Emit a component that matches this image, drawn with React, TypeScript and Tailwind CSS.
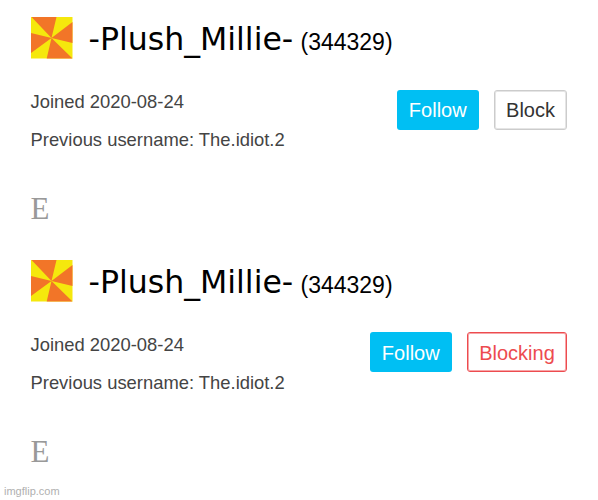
function Avatar() {
  return (
    <svg className="block h-[42px] w-[42px]" viewBox="0 0 42 42">
      <path fill="#f5e80d" d="M0 0H41.5V41.5H0Z" />
      <path fill="#f27528" d="M20.5 21L.5 0H25.5ZM20.5 21L41.5 5V26ZM20.5 21L41.5 41.5H15.7ZM20.5 21L0 36V16Z" />
    </svg>
  );
}

function Profile({ blocking }: { blocking: boolean }) {
  return (
    <section className="h-[243px] pt-[17px] pl-[30.5px] pr-[31px]">
      <header className="flex h-[42px] items-start">
        <Avatar />
        <h1 className="ml-[16px] mt-[4px] w-[205px] whitespace-nowrap font-['DejaVu_Sans',sans-serif] text-[31.6px] leading-[36px] text-black">-Plush_Millie-</h1>
        <span className="ml-[7px] mt-[10px] whitespace-nowrap text-[23px] leading-[30px] text-black">(344329)</span>
      </header>
      <div className="mt-[31px] flex items-start justify-between text-[18.4px] text-[#444]">
        <div className="leading-[24px]">
          <p>Joined 2020-08-24</p>
          <p className="mt-[14px]">Previous username: The.idiot.2</p>
        </div>
        <div className={blocking ? 'flex gap-[15px] text-[20px] -mt-px' : 'flex gap-[15px] text-[20px] -mt-[0.5px]'}>
          <button className="h-[40px] w-[82.5px] rounded-[3px] bg-[#00bff3] pt-px text-white">Follow</button>
          {blocking ? (
            <button className="h-[40px] w-[100px] rounded-[3px] border border-[#ed4b4f] pt-px text-[#ed4b4f] outline-1 -outline-offset-2 outline-[#ed4b4f]/50">Blocking</button>
          ) : (
            <button className="h-[40px] w-[73px] rounded-[3px] border border-[#ccc] pt-px text-[#333] outline-1 -outline-offset-2 outline-[#ccc]/50">Block</button>
          )}
        </div>
      </div>
      <p className="mt-[40px] font-['Liberation_Serif',serif] text-[31px] leading-[34px] text-[#999]">E</p>
    </section>
  );
}

export default function App() {
  return (
    <main className="h-[500px] w-[598px] overflow-hidden bg-white font-['Liberation_Sans',Arial,sans-serif]">
      <Profile blocking={false} />
      <Profile blocking={true} />
      <footer className="-mt-[2px] pl-[4px] text-[11px] leading-[14px] text-[#b0b0b0]">imgflip.com</footer>
    </main>
  );
}
